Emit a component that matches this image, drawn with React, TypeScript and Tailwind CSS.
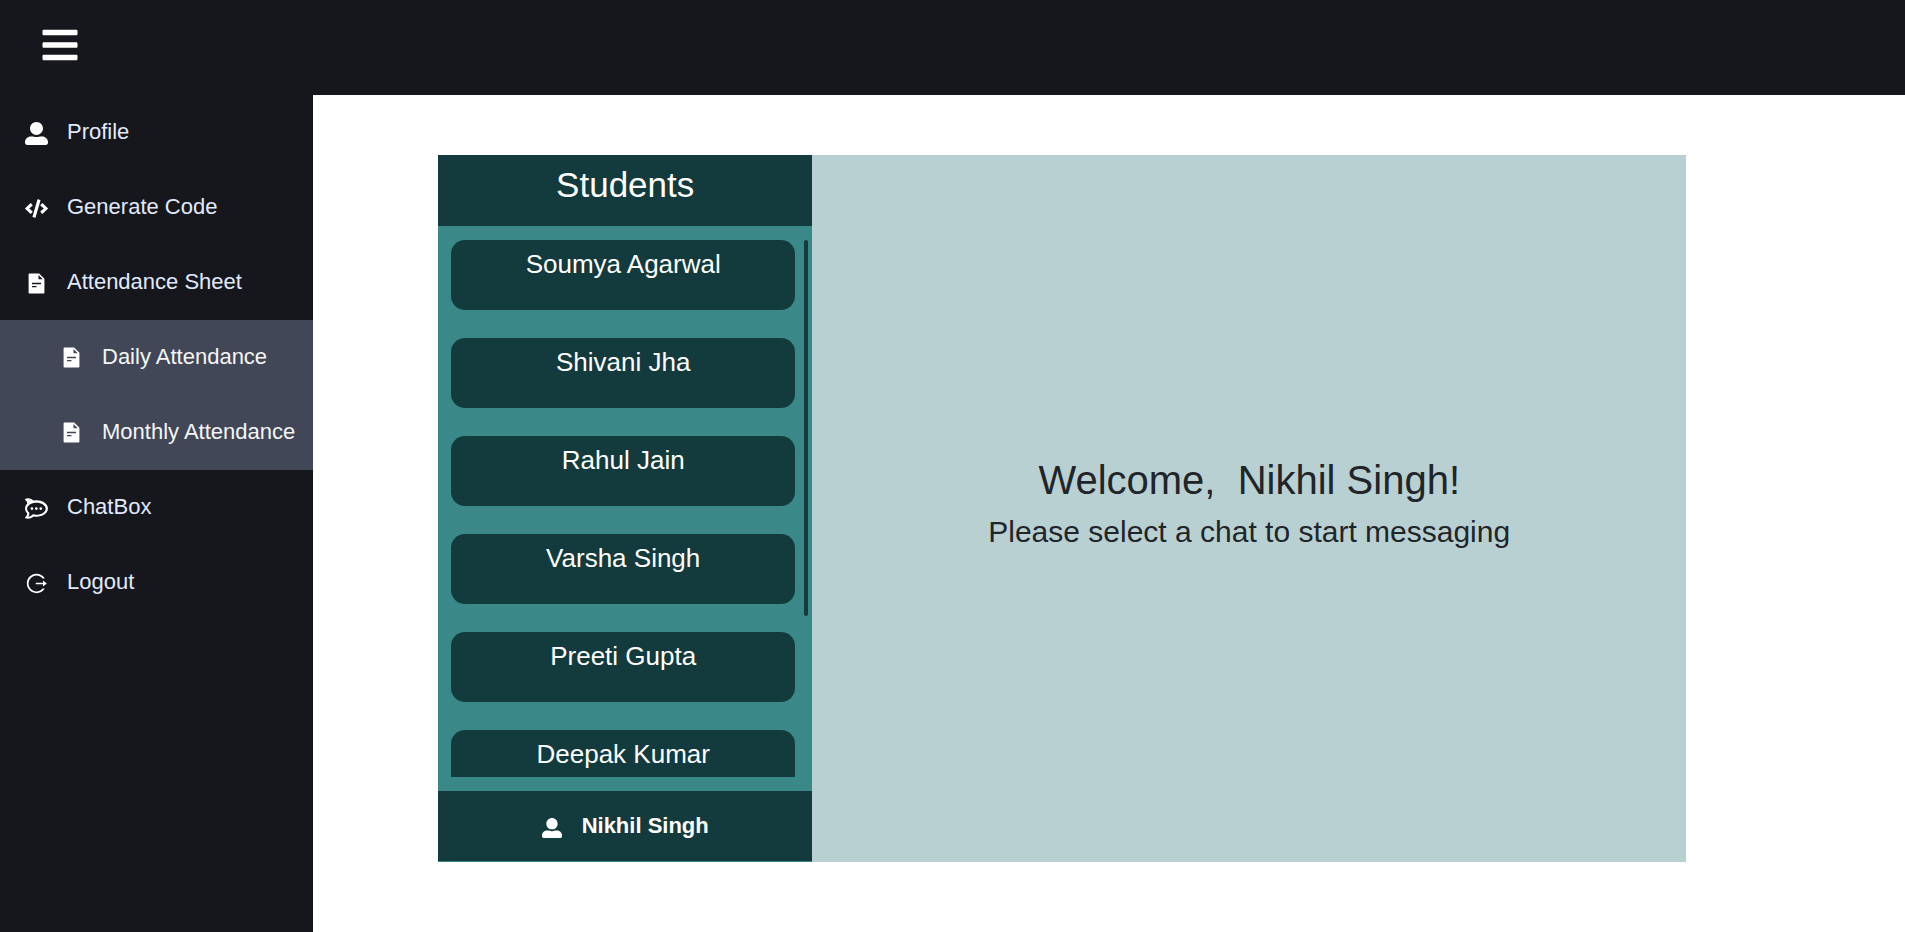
import { FaBars, FaCode, FaRocketchat, FaUserAlt } from "react-icons/fa";
import { AiFillFileText, AiOutlineLogout } from "react-icons/ai";
import type { IconType } from "react-icons";

type NavItem = { title: string; icon: IconType; children?: NavItem[] };

const navItems: NavItem[] = [
  { title: "Profile", icon: FaUserAlt },
  { title: "Generate Code", icon: FaCode },
  {
    title: "Attendance Sheet",
    icon: AiFillFileText,
    children: [
      { title: "Daily Attendance", icon: AiFillFileText },
      { title: "Monthly Attendance", icon: AiFillFileText },
    ],
  },
  { title: "ChatBox", icon: FaRocketchat },
  { title: "Logout", icon: AiOutlineLogout },
];

const students = [
  "Soumya Agarwal",
  "Shivani Jha",
  "Rahul Jain",
  "Varsha Singh",
  "Preeti Gupta",
  "Deepak Kumar",
];

const currentUser = "Nikhil Singh";

function NavEntry({ item }: { item: NavItem }) {
  const Icon = item.icon;
  return (
    <li>
      <a href="#" className="flex h-[75px] items-center gap-[19px] pl-[25px] text-[22px] text-[#e1e9fc]">
        <Icon className="mt-0.5 size-[23px] shrink-0 text-white" />
        <span className="pb-0.5 whitespace-nowrap">{item.title}</span>
      </a>
      {item.children && (
        <ul className="bg-[#414757]">
          {item.children.map((child) => (
            <li key={child.title}>
              <a href="#" className="flex h-[75px] items-center gap-[19px] pl-[60px] text-[22px] text-[#f5f5f5]">
                <child.icon className="size-[23px] shrink-0 text-white" />
                <span className="pb-0.5 whitespace-nowrap">{child.title}</span>
              </a>
            </li>
          ))}
        </ul>
      )}
    </li>
  );
}

function StudentPanel() {
  return (
    <aside className="flex w-[30%] flex-col bg-[#3b8888] pb-px text-white">
      <h2 className="h-[71px] bg-[#133b3d] pt-[9px] text-center text-[35px] leading-[42px]">Students</h2>
      <div className="flex gap-[9px] py-3.5 pr-1 pl-[13px]">
        <ul className="flex h-[537px] flex-1 flex-col gap-7 overflow-y-auto [scrollbar-width:none]">
          {students.map((name) => (
            <li key={name} className="shrink-0">
              <button
                type="button"
                className="flex h-[70px] w-full justify-center rounded-[14px] bg-[#133b3d] pt-2 text-[26px] leading-8"
              >
                {name}
              </button>
            </li>
          ))}
        </ul>
        <div aria-hidden="true" className="h-[376px] w-1 rounded-sm bg-[#133b3d]" />
      </div>
      <div className="flex h-[70px] items-center justify-center gap-5 bg-[#133b3d] text-[22px] font-bold">
        <FaUserAlt className="mt-[3px] size-5" />
        <span className="pb-0.5">{currentUser}</span>
      </div>
    </aside>
  );
}

export default function App() {
  return (
    <div className="flex min-h-screen flex-col bg-white font-['Liberation_Sans',Arial,sans-serif] text-[#212529]">
      <header className="flex h-[95px] items-center bg-[#15171c] pb-[5px] pl-10">
        <button type="button" aria-label="Menu" className="text-white">
          <FaBars className="size-10" />
        </button>
      </header>
      <div className="flex flex-1">
        <nav className="w-[313px] shrink-0 bg-[#15171c]">
          <ul>
            {navItems.map((item) => (
              <NavEntry key={item.title} item={item} />
            ))}
          </ul>
        </nav>
        <main className="flex flex-1 items-start pt-[60px] pr-[219px] pl-[125px]">
          <div className="flex w-full bg-[#b9d0d2]">
            <StudentPanel />
            <section className="flex flex-1 flex-col items-center justify-center pb-2.5 text-center">
              <h1 className="mb-2 text-[40px] leading-[48px] whitespace-pre">{`Welcome,  ${currentUser}!`}</h1>
              <p className="text-[30px] leading-[39px]">Please select a chat to start messaging</p>
            </section>
          </div>
        </main>
      </div>
    </div>
  );
}
